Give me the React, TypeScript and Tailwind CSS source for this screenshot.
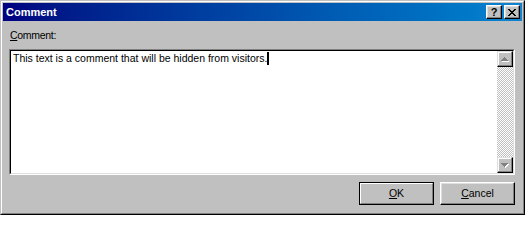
import React from "react";

function CloseGlyph() {
  // 8x7 pixel X, as drawn on classic caption buttons
  const rows = ["XX....XX", ".XX..XX.", "..XXXX..", "...XX...", "..XXXX..", ".XX..XX.", "XX....XX"];
  return (
    <svg width="8" height="7" viewBox="0 0 8 7" shapeRendering="crispEdges">
      {rows.flatMap((r, y) =>
        r.split("").map((c, x) => (c === "X" ? <rect key={`${x}-${y}`} x={x} y={y} width="1" height="1" fill="#000" /> : null))
      )}
    </svg>
  );
}

function Arrow({ down }: { down?: boolean }) {
  // disabled arrow: gray triangle with a white shadow 1px down-right
  const rows = down ? [[0, 7], [1, 5], [2, 3], [3, 1]] : [[3, 1], [2, 3], [1, 5], [0, 7]];
  return (
    <svg width="8" height="5" viewBox="0 0 8 5" shapeRendering="crispEdges">
      {rows.map(([x, w], y) => (
        <rect key={"s" + y} x={x + 1} y={y + 1} width={w} height="1" fill="#fff" />
      ))}
      {rows.map(([x, w], y) => (
        <rect key={"a" + y} x={x} y={y} width={w} height="1" fill="#808080" />
      ))}
    </svg>
  );
}

function CaptionButton({ children }: { children: React.ReactNode }) {
  return (
    <div className="flex h-[14px] w-[16px] items-center justify-center border border-t-white border-l-white border-r-black border-b-black bg-[#c0c0c0] shadow-[inset_-1px_-1px_#808080,inset_1px_1px_#dfdfdf]">
      {children}
    </div>
  );
}

function ScrollButton({ down }: { down?: boolean }) {
  return (
    <div className="flex h-[16px] w-[16px] items-center justify-center border border-t-[#dfdfdf] border-l-[#dfdfdf] border-r-black border-b-black bg-[#c0c0c0] shadow-[inset_-1px_-1px_#808080,inset_1px_1px_#fff]">
      <Arrow down={down} />
    </div>
  );
}

export default function App() {
  return (
    <div className="h-[215px] w-[525px] border border-t-[#c0c0c0] border-l-[#c0c0c0] border-r-black border-b-black bg-[#c0c0c0] font-['Liberation_Sans',Arial,sans-serif] text-black">
      <div className="flex h-full flex-col border border-t-white border-l-white border-r-[#808080] border-b-[#808080] p-px">
        {/* Title bar */}
        <div className="flex h-[18px] items-center justify-between bg-gradient-to-r from-[#000080] to-[#1084d0] pl-[3px] pr-[2px]">
          <span className="text-[11px] font-bold leading-none text-white">Comment</span>
          <div className="flex gap-[2px]">
            <CaptionButton>
              <span className="text-[11px] font-bold leading-none">?</span>
            </CaptionButton>
            <CaptionButton>
              <CloseGlyph />
            </CaptionButton>
          </div>
        </div>

        {/* Body */}
        <div className="flex flex-1 flex-col pl-[6px] pr-[7px] pt-[8px]">
          <div className="h-[13px] pl-px text-[10.5px] leading-[13px] tracking-[-0.3px]">
            <span className="underline underline-offset-[1px]">C</span>omment:
          </div>

          <div className="mt-[7px] h-[126px] border border-t-[#808080] border-l-[#808080] border-r-white border-b-white">
            <div className="flex h-full border border-t-black border-l-black border-r-[#dfdfdf] border-b-[#dfdfdf]">
              <div className="flex-1 bg-white pl-[2px] pt-px text-[10.5px] leading-[13px]">
                This text is a comment that will be hidden from visitors.
                <span className="inline-block h-[13px] w-[2px] bg-black align-top" />
              </div>
              <div className="flex w-[16px] flex-col">
                <ScrollButton />
                <div className="flex-1 bg-[repeating-conic-gradient(#c0c0c0_0_25%,#fff_0_50%)] bg-[length:2px_2px]" />
                <ScrollButton down />
              </div>
            </div>
          </div>

          <div className="mt-[7px] flex justify-end gap-[6px]">
            <div className="h-[23px] w-[75px] border border-black">
              <div className="flex h-full items-center justify-center border border-t-white border-l-white border-r-[#808080] border-b-[#808080] text-[10.5px]">
                <span>
                  <span className="underline underline-offset-[1px]">O</span>K
                </span>
              </div>
            </div>
            <div className="flex h-[23px] w-[75px] items-center justify-center border border-t-white border-l-white border-r-black border-b-black shadow-[inset_-1px_-1px_#808080,inset_1px_1px_#dfdfdf] text-[10.5px]">
              <span>
                <span className="underline underline-offset-[1px]">C</span>ancel
              </span>
            </div>
          </div>
        </div>
      </div>
    </div>
  );
}
